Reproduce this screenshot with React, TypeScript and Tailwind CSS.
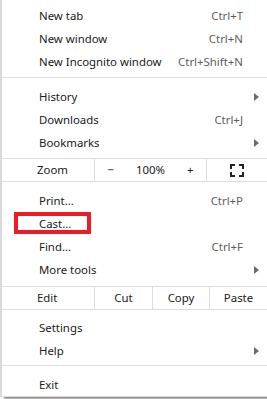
import React from 'react';

type Item = { label: string; shortcut?: string; arrow?: boolean };

const Arrow = () => (
  <svg width="5" height="8" viewBox="0 0 5 8" className="absolute right-[8px] top-[8px]">
    <path d="M0 0 L5 4 L0 8 Z" fill="#6b6b6b" />
  </svg>
);

const Row = ({ label, shortcut, arrow }: Item) => (
  <div className="relative flex h-[23px] items-center pl-[37px] pr-[24px]">
    <span className="flex-1 text-[#202020]">{label}</span>
    {shortcut && <span className="text-[#5c5c5c]">{shortcut}</span>}
    {arrow && <Arrow />}
  </div>
);

const FullscreenIcon = () => (
  <svg width="14" height="13" viewBox="0 0 14 13" fill="none" stroke="#222" strokeWidth="2">
    <path d="M1 5 V1 H5" />
    <path d="M9 1 H13 V5" />
    <path d="M13 8 V12 H9" />
    <path d="M5 12 H1 V8" />
  </svg>
);

export default function App() {
  return (
    <div className="h-[399px] w-[267px] overflow-hidden bg-white" style={{ fontFamily: '"Noto Sans", sans-serif' }}>
      <div className="relative h-[397px] border-b border-l-2 border-[#d9d9d9] bg-white pt-[4px] text-[11.4px] shadow-[4px_2px_2px_rgba(0,0,0,0.45)]">
        <Row label="New tab" shortcut="Ctrl+T" />
        <Row label="New window" shortcut="Ctrl+N" />
        <Row label="New Incognito window" shortcut="Ctrl+Shift+N" />
        <div className="mb-[7px] mt-[4px] h-px bg-[#dcdcdc]" />

        <Row label="History" arrow />
        <Row label="Downloads" shortcut="Ctrl+J" />
        <Row label="Bookmarks" arrow />

        {/* zoom row */}
        <div className="mt-[4px] flex h-[24px] border-y border-[#dcdcdc]">
          <div className="flex w-[92px] items-center pl-[35px] text-[#202020]">Zoom</div>
          <div className="flex w-[112px] items-center justify-center gap-[22px] border-l border-[#dcdcdc] text-[#202020]">
            <span>−</span>
            <span>100%</span>
            <span>+</span>
          </div>
          <div className="flex flex-1 items-center justify-center border-l border-[#dcdcdc]">
            <FullscreenIcon />
          </div>
        </div>

        <div className="mt-[7px]">
          <Row label="Print..." shortcut="Ctrl+P" />
          <Row label="Cast..." />
          <Row label="Find..." shortcut="Ctrl+F" />
          <Row label="More tools" arrow />
        </div>

        {/* edit row */}
        <div className="mt-[5px] flex h-[24px] border-y border-[#dcdcdc] text-[#202020]">
          <div className="flex w-[92px] items-center pl-[35px]">Edit</div>
          <div className="flex w-[58px] items-center justify-center border-l border-[#dcdcdc]">Cut</div>
          <div className="flex w-[57px] items-center justify-center border-l border-[#dcdcdc]">Copy</div>
          <div className="flex flex-1 items-center justify-center border-l border-[#dcdcdc]">Paste</div>
        </div>

        <div className="mt-[6px]">
          <Row label="Settings" />
          <Row label="Help" arrow />
        </div>
        <div className="mb-[7px] mt-[3px] h-px bg-[#dcdcdc]" />
        <Row label="Exit" />

        {/* red highlight around Cast */}
        <div className="absolute left-[12px] top-[212px] h-[22px] w-[77px] border-4 border-[#ec1c24]" />
      </div>
    </div>
  );
}
